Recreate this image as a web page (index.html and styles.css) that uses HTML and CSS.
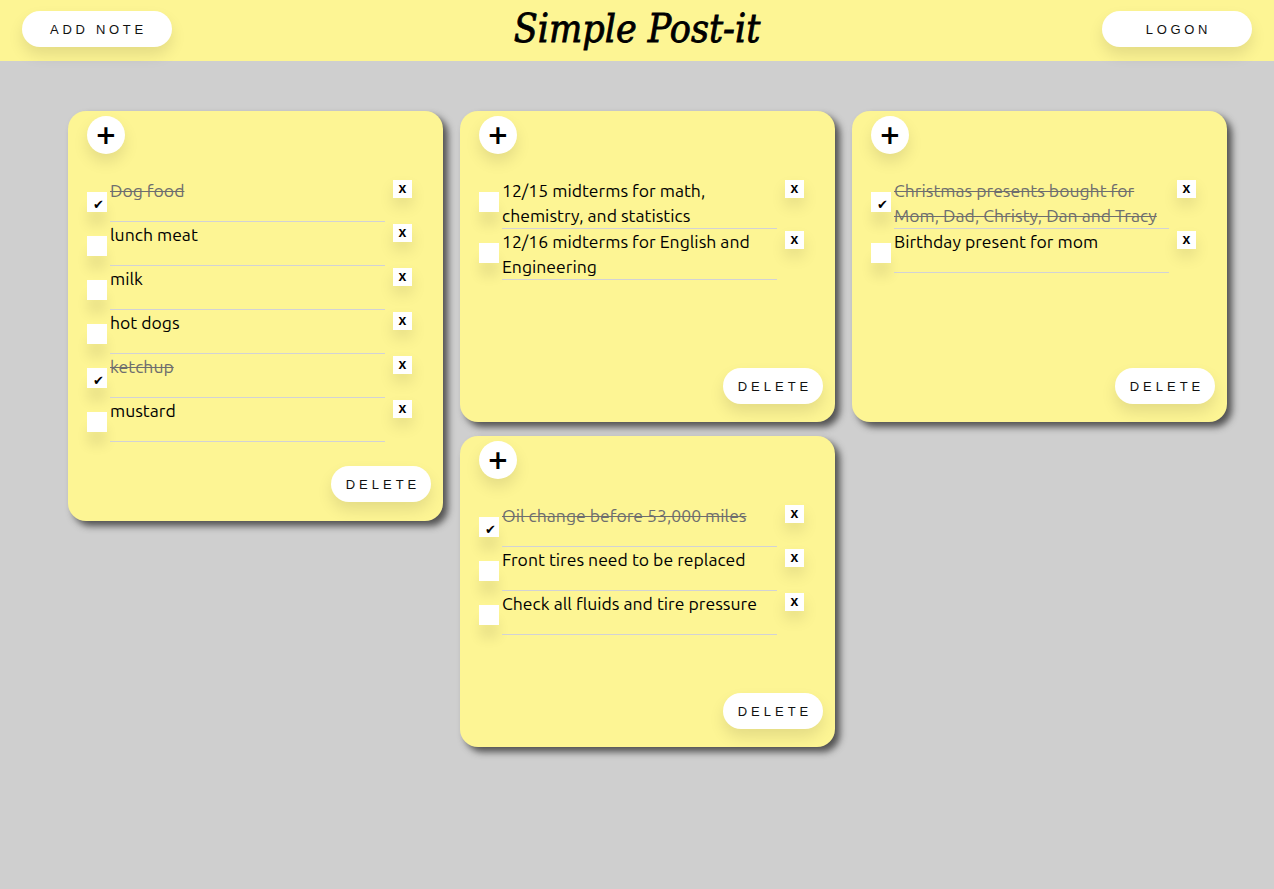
FILE: index.html
```html
<!DOCTYPE html>
<html lang="en">
<head>
<meta charset="utf-8">
<title>Simple Post-it</title>
<link rel="stylesheet" href="styles.css">
</head>
<body>
<header class="topbar">
  <button class="pill">ADD NOTE</button>
  <h1 class="title">Simple Post-it</h1>
  <button class="pill">LOGON</button>
</header>
<main class="board">
  <div class="column">
    <section class="note tall">
      <button class="add">+</button>
      <ul class="items">
        <li class="item done"><span class="check">✔</span><div class="text">Dog food</div><span class="del">x</span></li>
        <li class="item"><span class="check"></span><div class="text">lunch meat</div><span class="del">x</span></li>
        <li class="item"><span class="check"></span><div class="text">milk</div><span class="del">x</span></li>
        <li class="item"><span class="check"></span><div class="text">hot dogs</div><span class="del">x</span></li>
        <li class="item done"><span class="check">✔</span><div class="text">ketchup</div><span class="del">x</span></li>
        <li class="item"><span class="check"></span><div class="text">mustard</div><span class="del">x</span></li>
      </ul>
      <button class="pill delete">DELETE</button>
    </section>
  </div>
  <div class="column">
    <section class="note">
      <button class="add">+</button>
      <ul class="items">
        <li class="item"><span class="check"></span><div class="text">12/15 midterms for math, chemistry, and statistics</div><span class="del">x</span></li>
        <li class="item"><span class="check"></span><div class="text">12/16 midterms for English and Engineering</div><span class="del">x</span></li>
      </ul>
      <button class="pill delete">DELETE</button>
    </section>
    <section class="note">
      <button class="add">+</button>
      <ul class="items">
        <li class="item done"><span class="check">✔</span><div class="text">Oil change before 53,000 miles</div><span class="del">x</span></li>
        <li class="item"><span class="check"></span><div class="text">Front tires need to be replaced</div><span class="del">x</span></li>
        <li class="item"><span class="check"></span><div class="text">Check all fluids and tire pressure</div><span class="del">x</span></li>
      </ul>
      <button class="pill delete">DELETE</button>
    </section>
  </div>
  <div class="column">
    <section class="note">
      <button class="add">+</button>
      <ul class="items">
        <li class="item done"><span class="check">✔</span><div class="text">Christmas presents bought for Mom, Dad, Christy, Dan and Tracy</div><span class="del">x</span></li>
        <li class="item"><span class="check"></span><div class="text">Birthday present for mom</div><span class="del">x</span></li>
      </ul>
      <button class="pill delete">DELETE</button>
    </section>
  </div>
</main>
</body>
</html>
```
FILE: styles.css
```css
* { box-sizing: border-box; }
html, body { margin: 0; padding: 0; }
body {
  background: #cfcfcf;
  min-height: 889px;
  font-family: "Ubuntu", "Noto Sans", "Open Sans", sans-serif;
}
.topbar {
  height: 61px;
  background: #fdf594;
  display: flex;
  align-items: flex-start;
  justify-content: space-between;
  padding: 0 22px;
}
.topbar .pill { margin-top: 11px; }
.title {
  margin: 0;
  font-family: "DejaVu Serif", "Liberation Serif", serif;
  font-stretch: condensed;
  font-style: italic;
  font-weight: normal;
  font-size: 39px;
  line-height: 58px;
  color: #000;
  -webkit-text-stroke: 0.8px #000;
}
.pill {
  width: 150px;
  height: 36px;
  border: none;
  border-radius: 18px;
  background: #fff;
  font-family: "Liberation Sans", Arial, sans-serif;
  font-size: 13px;
  letter-spacing: 3.7px;
  color: #111;
  padding: 0 0 0 3px;
  box-shadow: 0 8px 15px rgba(0, 0, 0, 0.1);
  cursor: pointer;
}
.board {
  display: flex;
  align-items: flex-start;
  gap: 17px;
  padding: 50px 0 0 68px;
}
.column {
  display: flex;
  flex-direction: column;
  gap: 14px;
  width: 375px;
}
.note {
  background: #fdf594;
  border-radius: 18px;
  box-shadow: 5px 5px 7px rgba(40, 40, 40, 0.75);
  min-height: 311px;
  padding: 5px 12px 18px 19px;
  display: flex;
  flex-direction: column;
}
.note.tall { padding-bottom: 19px; }
.add {
  width: 38px;
  height: 38px;
  border-radius: 50%;
  border: none;
  background: #fff;
  font-family: "DejaVu Sans", sans-serif;
  font-weight: bold;
  font-size: 26px;
  line-height: 38px;
  padding: 0;
  color: #000;
  box-shadow: 0 8px 15px rgba(0, 0, 0, 0.1);
}
.items {
  list-style: none;
  margin: 24px 0 0;
  padding: 0;
}
.item {
  display: flex;
  align-items: flex-start;
}
.check {
  width: 20px;
  height: 20px;
  margin-top: 14px;
  margin-right: 3px;
  background: #fff;
  flex: none;
  font-family: "DejaVu Sans", sans-serif;
  font-size: 13px;
  line-height: 25px;
  padding-left: 6px;
  color: #000;
  box-shadow: 0 14px 12px rgba(0, 0, 0, 0.07);
}
.text {
  width: 275px;
  min-height: 44px;
  font-size: 17.6px;
  line-height: 25px;
  color: #000;
  border-bottom: 1px solid #d2d2d6;
  flex: none;
}
.done .text {
  color: #6e6e6e;
  text-decoration: line-through;
}
.del {
  width: 19px;
  height: 18px;
  margin: 2px 0 0 8px;
  background: #fff;
  flex: none;
  font-family: "Liberation Sans", Arial, sans-serif;
  font-weight: bold;
  font-size: 14px;
  line-height: 17px;
  text-align: center;
  color: #000;
  box-shadow: 0 8px 15px rgba(0, 0, 0, 0.1);
}
.delete {
  width: 100px;
  align-self: flex-end;
  margin-top: auto;
  letter-spacing: 4px;
  padding-left: 4px;
}
.note.tall .delete { margin-top: 24px; }
```
